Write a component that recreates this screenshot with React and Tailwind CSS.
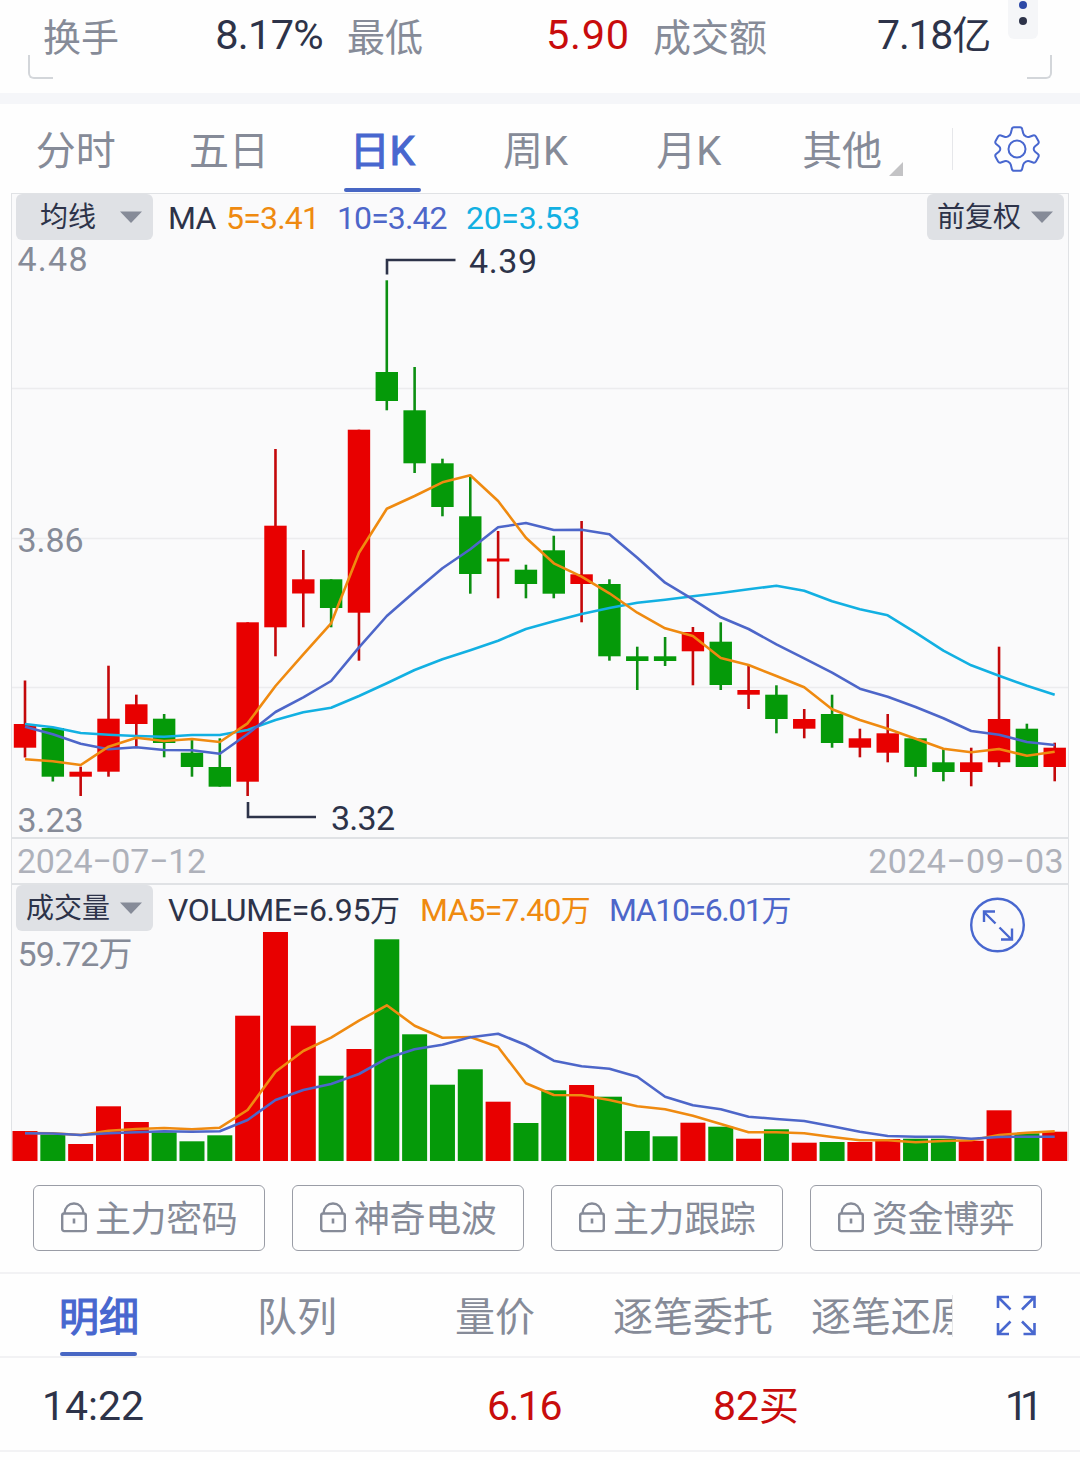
import React from 'react';

// [color, high, bodyTop, bodyBottom, low]
const candles = [
  ['r', 680.5, 724, 747.7, 757.5],
  ['g', 728, 728, 776.7, 781.5],
  ['r', 766.7, 771.7, 776.7, 796],
  ['r', 665.7, 718.7, 771.7, 776.7],
  ['r', 694.7, 704.3, 724, 746.7],
  ['g', 714, 718.7, 743, 757.3],
  ['g', 740, 752.7, 767, 776.7],
  ['g', 738.3, 767, 786.7, 786.7],
  ['r', 622.3, 622.3, 781.7, 796],
  ['r', 449, 525.7, 627.3, 656.3],
  ['r', 550, 579.3, 593.5, 627.3],
  ['g', 579.3, 579.3, 608, 627.3],
  ['r', 429.7, 429.7, 612.7, 660.7],
  ['g', 280.3, 372, 401, 410.3],
  ['g', 367, 410.3, 463.3, 473],
  ['g', 458.7, 463.3, 507, 516.3],
  ['g', 476.7, 516.3, 574, 593.7],
  ['r', 531, 558.5, 561.5, 598.3],
  ['g', 564.7, 569.7, 584, 598.3],
  ['g', 535.7, 550.3, 593.7, 598.3],
  ['r', 521, 574.3, 584, 622.3],
  ['g', 579.3, 584, 656.3, 660.7],
  ['g', 646.7, 656.3, 661, 690],
  ['g', 637, 656.3, 661, 666],
  ['r', 627, 632, 651.3, 685.3],
  ['g', 622.3, 641.7, 685, 690],
  ['r', 665.3, 690, 694.7, 709],
  ['g', 685.3, 694.7, 719, 733.3],
  ['r', 709, 719, 728.7, 738.3],
  ['g', 694.7, 714, 743, 747.7],
  ['r', 728.7, 738.3, 747.7, 757.3],
  ['r', 714, 733.3, 752.7, 762.3],
  ['g', 738.3, 738.3, 767, 776.7],
  ['g', 748.3, 762.3, 772, 781.3],
  ['r', 747.7, 762.3, 772, 786.3],
  ['r', 646.7, 719, 762.3, 767],
  ['g', 723.7, 728.7, 767, 767],
  ['r', 742.7, 747.7, 767, 781.3],
];

const ma5 = [759.3, 761.3, 765, 746.7, 737.7, 741, 739, 742, 723.3, 686, 654.3, 623.3, 552.7, 508.7, 496, 482.3, 475.3, 501, 537.7, 563.3, 576.7, 593.3, 612.7, 628.3, 636, 658, 665, 676, 687.3, 709.3, 720, 728.7, 738.7, 748.7, 752.3, 749, 755.7, 751.7];
const ma10 = [726.7, 734.3, 743.7, 749.3, 747.3, 750, 750.3, 753.7, 734, 712, 697.3, 681, 647.3, 616, 591.7, 568.3, 549.3, 527.3, 523, 530, 529.7, 534.3, 557.7, 582.7, 599.3, 617.3, 629, 644.3, 658.3, 672.7, 688.7, 696.7, 707, 718.3, 731, 734.7, 742, 745];
const ma20 = [724, 727.3, 733, 734.7, 736, 736.7, 735, 735, 730, 720, 712.3, 707.7, 696, 683.3, 670, 659.3, 650.3, 640.7, 629, 621.3, 614, 608, 602.7, 599.7, 596.3, 593, 589.3, 585.7, 590.7, 601.3, 609.3, 615.3, 632.7, 650.7, 665.3, 675.7, 685.7, 694.7];

const volumes = [1131, 1134.5, 1144, 1106.3, 1122, 1132.3, 1141.3, 1135.3, 1015.7, 932, 1025.7, 1075.7, 1049, 939.3, 1034.3, 1084.7, 1069.3, 1101.7, 1123, 1090.3, 1085, 1096.7, 1131, 1136.3, 1122.7, 1126.7, 1138.7, 1129.3, 1142.7, 1142, 1142, 1139, 1138.7, 1138.7, 1140.7, 1110.3, 1133.3, 1131.7];
const volMa5 = [1133, 1133.3, 1135, 1130.7, 1129, 1128, 1129.3, 1127.7, 1110, 1071.7, 1051, 1037.7, 1020.7, 1005.3, 1025.7, 1037.7, 1037, 1047, 1083.3, 1095, 1095.3, 1100, 1106.3, 1109.3, 1115.7, 1124, 1132.3, 1132.3, 1133.3, 1137, 1140.3, 1140.3, 1142.3, 1141, 1140.3, 1135, 1132.7, 1131.3];
const volMa10 = [1133.3, 1133.5, 1135, 1133.3, 1132.3, 1131.3, 1131.7, 1131.3, 1120, 1100, 1090, 1084, 1074, 1058.3, 1049.3, 1044.7, 1037.3, 1033.7, 1045, 1060.7, 1066.3, 1068.7, 1076.7, 1096.7, 1105.3, 1109.3, 1116.7, 1119, 1121, 1126.3, 1131.7, 1136, 1136.7, 1136.7, 1138.7, 1137, 1136.7, 1136.7];

const COLORS = { r: '#e80000', g: '#059a09' };
const WICKS = { r: '#c4080a', g: '#0c8f12' };

const xAt = (i) => 25 + i * 27.83;
const toPoints = (arr) => arr.map((y, i) => `${xAt(i).toFixed(1)},${y}`).join(' ');

const Line = ({ data, color }) => (
  <polyline points={toPoints(data)} fill="none" stroke={color} strokeWidth="2.6" strokeLinejoin="round" />
);

const Label = ({ x, y, w, color = '#868b98', children }) => (
  <text x={x} y={y} fill={color} fontSize="34" textLength={w} lengthAdjust="spacing">
    {children}
  </text>
);

const Dropdown = ({ label }) => (
  <div className="flex h-[46px] w-[137px] items-center justify-end rounded-md bg-[#dfe1e5] pr-[11px] text-[28px] text-[#2d3349]">
    <span className="flex-1 pt-[2px] text-center leading-none">{label}</span>
    <svg width="22" height="12" viewBox="0 0 22 12">
      <path d="M0 0.5h22L11 12z" fill="#868b98" />
    </svg>
  </div>
);

const LockButton = ({ label }) => (
  <button className="flex h-[66px] w-[232px] items-center rounded-md border border-[#9a9da6] pl-[27px] text-[#868b98]">
    <svg className="-mt-[2px]" width="26" height="31" viewBox="0 0 26 31" fill="none" stroke="currentColor" strokeWidth="2.4">
      <rect x="1.2" y="11.5" width="23.6" height="17.6" rx="2" />
      <path d="M3.5 11.5C4 5 8 1.5 13 1.5s9 3.5 9.5 10" />
      <path d="M13 16.5v5" strokeWidth="2.6" />
    </svg>
    <span className="ml-2 pt-[4px] text-[36px] leading-none tracking-[-0.4px] whitespace-nowrap">{label}</span>
  </button>
);

const PriceChart = () => (
  <svg className="block overflow-visible" width="1056" height="597" viewBox="12 240 1056 597">
    {[388.5, 538.5, 687.5].map((y) => (
      <path key={y} d={`M12 ${y}H1068`} stroke="#ececee" strokeWidth="1.5" />
    ))}
    <Label x="17.5" y="271" w="70">4.48</Label>
    <Label x="17.5" y="552" w="66">3.86</Label>
    <Label x="17.5" y="832" w="66">3.23</Label>
    {candles.map(([c, high, top, bottom, low], i) => (
      <g key={i}>
        <path d={`M${xAt(i)} ${high}V${low}`} stroke={WICKS[c]} strokeWidth="2.6" />
        <rect x={xAt(i) - 11.2} y={top} width="22.4" height={bottom - top} fill={COLORS[c]} />
      </g>
    ))}
    <Line data={ma20} color="#12b0e2" />
    <Line data={ma10} color="#4d66c9" />
    <Line data={ma5} color="#ef8a10" />
    <path d="M387 274.5V260H455.5M248 802V817H316" fill="none" stroke="#2d3349" strokeWidth="2.6" />
    <Label x="469" y="273" w="68" color="#2d3349">4.39</Label>
    <Label x="331" y="830" w="64" color="#2d3349">3.32</Label>
  </svg>
);

const VolumeChart = () => (
  <svg className="block" width="1056" height="230" viewBox="12 931 1056 230">
    <Label x="17.5" y="966" w="115">59.72万</Label>
    {volumes.map((y, i) => (
      <rect key={i} x={xAt(i) - 12.5} y={y} width="25" height={1161 - y} fill={COLORS[candles[i][0]]} />
    ))}
    <Line data={volMa5} color="#ef8a10" />
    <Line data={volMa10} color="#4d66c9" />
  </svg>
);

const periods = ['分时', '五日', '日K', '周K', '月K', '其他'];
const detailTabs = ['明细', '队列', '量价', '逐笔委托', '逐笔还原'];
const locked = ['主力密码', '神奇电波', '主力跟踪', '资金博弈'];

const App = () => {
  return (
    <div className="h-[1460px] w-[1080px] overflow-hidden bg-[#fefefe] font-[Roboto,'Noto_Sans_CJK_SC',sans-serif] text-[#2d3349]">
      {/* Quote summary */}
      <div className="relative flex h-[93px] items-start pt-[12px] pl-[43px] text-[38px] leading-[52px] whitespace-nowrap text-[#868b98]">
        <span className="w-[76px]">换手</span>
        <span className="-mt-[3px] w-[204px] text-right text-[41.500px] tracking-[-0.700px] text-[#2d3349]">8.17%</span>
        <span className="ml-[24px] w-[76px]">最低</span>
        <span className="-mt-[3px] w-[207px] text-right text-[41.500px] tracking-[0.800px] text-[#c80c0c]">5.90</span>
        <span className="ml-[23px] w-[114px]">成交额</span>
        <span className="-mt-[3px] w-[223px] text-right text-[41px] tracking-[-1.200px] text-[#2d3349]">7.18<span className="text-[39px]">亿</span></span>
        <div className="absolute top-[55px] left-[28px] h-[24px] w-[25px] rounded-bl-md border-b-[2.5px] border-l-[2.5px] border-[#d3d6da]" />
        <div className="absolute top-[55px] left-[1027px] h-[24px] w-[25px] rounded-br-md border-r-[2.5px] border-b-[2.5px] border-[#d3d6da]" />
        <div className="absolute top-0 left-[1008px] flex h-[39px] w-[30px] flex-col items-center gap-2 rounded-b-md bg-[#f5f6f8] pt-[1px]">
          <i className="size-2 rounded-full bg-[#2c48a6]" />
          <i className="size-2 rounded-full bg-[#2d3349]" />
        </div>
      </div>

      <div className="h-[11px] bg-[#f5f6f9]" />

      {/* Period tabs */}
      <div className="flex h-[89px] items-stretch text-[40px] text-[#868b98]">
        <div className="-ml-[1px] flex w-[921px]">
          {periods.map((p) => (
            <div key={p} className={p === '日K' ? 'relative flex w-[153.3px] justify-center pt-[18px] text-[#4867cf] [-webkit-text-stroke:1.2px_#4867cf]' : 'relative flex w-[153.3px] justify-center pt-[18px]'}>
              <span className="leading-[60px]">{p}</span>
              {p === '日K' && <div className="absolute bottom-[1px] h-[4px] w-[77px] rounded-full bg-[#4867c4]" />}
              {p === '其他' && (
                <svg className="absolute top-[58px] left-[124px]" width="14" height="14">
                  <path d="M14 0v14H0z" fill="#c3c3c5" />
                </svg>
              )}
            </div>
          ))}
        </div>
        <div className="ml-[32px] flex h-[89px] items-center">
          <div className="h-[42px] w-px bg-[#e6e7ea]" />
          <svg className="ml-[40px]" width="48" height="48" viewBox="993 124.5 48 48" fill="none" stroke="#4867cf" strokeWidth="2" strokeLinejoin="round">
            <path d="M1014 126.700h6q1.800 0 2.200 2l1 4q.5 2 2.400 3l.6.300q1.600.9 3.400.2l3.500-1.200q1.800-.6 2.800 1.100l2.500 4.500q.9 1.600-.5 2.800l-2.800 2.400q-1.400 1.200-1.400 2.700t1.400 2.700l2.800 2.400q1.400 1.200.5 2.800l-2.500 4.500q-1 1.700-2.800 1.100l-3.500-1.200q-1.800-.7-3.400.2l-.6.300q-1.900 1-2.400 3l-1 4q-.4 2-2.200 2h-6q-1.800 0-2.200-2l-1-4q-.5-2-2.400-3l-.6-.3q-1.600-.9-3.400-.2l-3.500 1.200q-1.800.6-2.800-1.100l-2.500-4.500q-.9-1.600.5-2.800l2.800-2.400q1.400-1.200 1.400-2.700t-1.400-2.700l-2.800-2.400q-1.400-1.200-.5-2.800l2.500-4.500q1-1.700 2.800-1.100l3.500 1.200q1.800.7 3.400-.2l.6-.3q1.900-1 2.400-3l1-4q.4-2 2.200-2z" />
            <circle cx="1017" cy="148.5" r="8.5" />
          </svg>
        </div>
      </div>

      {/* Chart panel */}
      <div className="ml-[11px] h-[968px] w-[1058px] border-x border-t border-[#e0e2e5] bg-[#fafafb]">
        <div className="flex h-[46px] items-center pr-[4px] pl-[4px] text-[32px] whitespace-nowrap">
          <Dropdown label="均线" />
          <span className="ml-[15px] w-[58px] pt-[2px] tracking-[-0.800px]">MA</span>
          <span className="w-[111px] pt-[2px] tracking-[-0.800px] text-[#ef8a10]">5=3.41</span>
          <span className="w-[129px] pt-[2px] tracking-[-0.900px] text-[#4d66c9]">10=3.42</span>
          <span className="pt-[2px] tracking-[-0.300px] text-[#12b0e2]">20=3.53</span>
          <div className="ml-auto">
            <Dropdown label="前复权" />
          </div>
        </div>
        <PriceChart />
        <div className="flex h-[48px] items-center justify-between border-y-2 border-[#e0e2e5] pr-[4px] pl-[5px] text-[34px] text-[#aeb1ba]">
          <span className="tracking-[-0.300px]">2024−07−12</span>
          <span className="tracking-[0.400px]">2024−09−03</span>
        </div>
        <div className="relative flex h-[46px] items-center pl-[4px] text-[32px] whitespace-nowrap">
          <Dropdown label="成交量" />
          <span className="ml-[15px] w-[252px] pt-[3px] tracking-[-0.300px]">VOLUME=6.95<span className="text-[30px]">万</span></span>
          <span className="w-[189px] pt-[3px] tracking-[-0.800px] text-[#ef8a10]">MA5=7.40<span className="text-[30px]">万</span></span>
          <span className="pt-[3px] tracking-[-1.400px] text-[#4d66c9]">MA10=6.01<span className="text-[30px]">万</span></span>
          <svg className="absolute top-[12px] left-[958px]" width="56" height="56" viewBox="0 0 56 56" fill="none" stroke="#4867cf" strokeWidth="2.4">
            <circle cx="27.500" cy="28" r="26.3" />
            <path d="M25.500 26.500L14.500 15.500M14 25V14.500H25M29.500 30.500L41 42M42 31.500V42.500H31" />
          </svg>
        </div>
        <VolumeChart />
      </div>

      {/* Locked indicators */}
      <div className="flex h-[113px] justify-between border-b-2 border-[#f2f2f4] px-[33px] pt-[24px] pr-[38px]">
        {locked.map((l) => (
          <LockButton key={l} label={l} />
        ))}
      </div>

      {/* Detail tabs */}
      <div className="flex h-[84px] border-b-2 border-[#f2f2f4] text-[40px] text-[#868b98]">
        <div className="flex h-full w-[952px] overflow-hidden">
          {detailTabs.map((t, i) => (
            <div key={t} className={i === 0 ? 'relative flex w-[198px] shrink-0 justify-center pt-[14px] text-[#4867cf] [-webkit-text-stroke:1.2px_#4867cf]' : 'relative flex w-[198px] shrink-0 justify-center pt-[14px]'}>
              <span className="leading-[60px] whitespace-nowrap">{t}</span>
              {i === 0 && <div className="absolute bottom-0 left-[60px] h-[4px] w-[77px] rounded-full bg-[#4867c4]" />}
            </div>
          ))}
        </div>
        <div className="mt-[21px] h-[42px] w-px bg-[#e6e7ea]" />
        <svg className="mt-[21px] ml-[43px]" width="41" height="41" viewBox="0 0 41 41" fill="none" stroke="#4867cf" strokeWidth="2.6">
          <path d="M14.5 14.5L2.5 2.5M2 13V2H13M26 14.5L38 2.5M27.5 2H38.5V13M14.5 26.5L2.5 38.5M2 28V39H13M26 26.5L38 38.5M27.5 39H38.5V28" />
        </svg>
      </div>

      {/* Trade row */}
      <div className="flex h-[94px] items-center border-b-2 border-[#f2f2f4] pt-[5px] pr-[45px] pl-[42px] text-[41px] whitespace-nowrap">
        <span className="w-[445px]">14:22</span>
        <span className="w-[226px] tracking-[-1.500px] text-[#c80c0c]">6.16</span>
        <span className="text-[#c80c0c]">82<span className="text-[40px]">买</span></span>
        <span className="ml-auto tracking-[-8px]">11</span>
      </div>
    </div>
  );
};

export default App;
